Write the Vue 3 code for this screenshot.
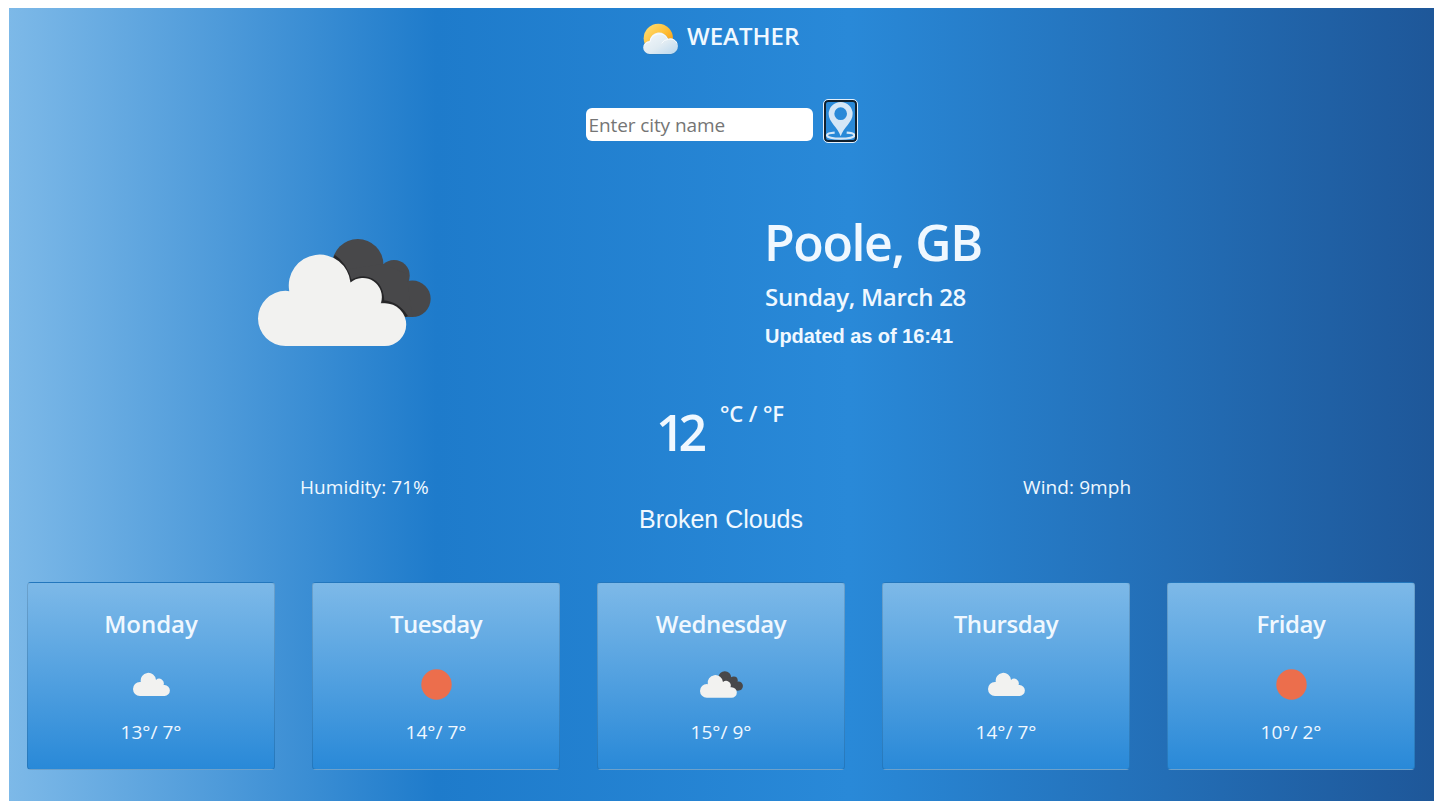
<script setup>
const days = [
  { name: 'Monday', cls: 'mon', icon: 'cloud', temp: '13°/ 7°' },
  { name: 'Tuesday', cls: 'tue', icon: 'sun', temp: '14°/ 7°' },
  { name: 'Wednesday', cls: 'wed', icon: 'broken', temp: '15°/ 9°' },
  { name: 'Thursday', cls: 'thu', icon: 'cloud', temp: '14°/ 7°' },
  { name: 'Friday', cls: 'fri', icon: 'sun', temp: '10°/ 2°' },
]
</script>

<template>
  <main class="app">
    <header class="brand">
      <svg class="logo" viewBox="0 0 108 94">
        <defs>
          <linearGradient id="sunFill" x1="0" y1="0" x2="1" y2="1">
            <stop offset="0" stop-color="#ffe27a" />
            <stop offset="0.5" stop-color="#ffbf38" />
            <stop offset="1" stop-color="#f08a00" />
          </linearGradient>
          <linearGradient id="cloudFill" x1="0" y1="0" x2="1" y2="1">
            <stop offset="0" stop-color="#f4f8fb" />
            <stop offset="0.55" stop-color="#e0ebf2" />
            <stop offset="1" stop-color="#b9d7ee" />
          </linearGradient>
        </defs>
        <circle cx="46" cy="45" r="44" fill="url(#sunFill)" />
        <path d="M20 93a19 19 0 0 1 1-40a28 28 0 0 1 53-8a24 24 0 1 1 10 48z" fill="#3277ad" opacity=".5" transform="translate(1 1)" />
        <path d="M20 92a19.500 19.500 0 0 1 0-39a28.500 28.500 0 0 1 55-7a23.500 23.500 0 1 1 9 46z" fill="url(#cloudFill)" />
        <path d="M4 66a18 18 0 0 1 17-11a28 27 0 0 1 53-8M56 60a25 25 0 0 1 20-12a23 23 0 0 1 26 12" fill="none" stroke="#fff" stroke-width="3" opacity=".8" />
      </svg>
      <h1>WEATHER</h1>
    </header>

    <form class="search" @submit.prevent>
      <input type="text" placeholder="Enter city name" />
      <button type="button" aria-label="Current location">
        <svg viewBox="0 0 87 117">
          <path d="M26 95C10 96 3 99 3 103c0 6 18 10 41 10s41-4 41-10c0-4-8-7-23-8" fill="none" stroke="#d5e6f6" stroke-width="6.500" />
          <path fill-rule="evenodd" d="M44 106C36 80 8 63 8 39a36 36 0 0 1 72 0c0 24-28 41-36 67zM44 19a19 19 0 1 0 0 38 19 19 0 0 0 0-38z" fill="#d5e6f6" />
        </svg>
      </button>
    </form>

    <section class="current">
      <div class="picture">
        <svg class="big-icon" viewBox="54 54 520 324">
          <g fill="#48484a">
            <circle cx="354" cy="132" r="77" />
            <circle cx="463" cy="165" r="47" />
            <circle cx="518" cy="235" r="55" />
            <path d="M300 150L430 130 500 160 518 290H430z" />
          </g>
          <path d="M283 107Q317 128 333 184Q350 171 371 171Q427 177 430 243Q475 247 501 288" fill="none" stroke="#262628" stroke-width="8" />
          <path d="M137 377a83 83 0 0 1 0-166q6 0 11 1a93 93 0 1 1 184-26a57 57 0 0 1 91 62h12a64.500 64.500 0 0 1 0 129z" fill="#f2f2f0" />
        </svg>
      </div>
      <div class="place">
        <h2>Poole, GB</h2>
        <h3>Sunday, March 28</h3>
        <h4>Updated as of 16:41</h4>
      </div>
    </section>

    <section class="details">
      <p class="side humidity"><span>Humidity: 71%</span></p>
      <div class="middle">
        <div class="temperature">
          <strong>12</strong>
          <span class="units">°C / °F</span>
        </div>
        <p class="description">Broken Clouds</p>
      </div>
      <p class="side wind"><span>Wind: 9mph</span></p>
    </section>

    <section class="forecast">
      <div v-for="day in days" :key="day.name" class="column">
        <article class="card">
          <h3><span :class="day.cls">{{ day.name }}</span></h3>
          <div class="slot">
            <svg v-if="day.icon === 'sun'" width="31" height="31" viewBox="0 0 31 31">
              <circle cx="15.500" cy="15.500" r="15.200" fill="#ec6e4c" />
            </svg>
            <svg v-else-if="day.icon === 'cloud'" width="37" height="24" viewBox="54 92 447 286" preserveAspectRatio="none">
              <path d="M137 377a83 83 0 0 1 0-166q6 0 11 1a93 93 0 1 1 184-26a57 57 0 0 1 91 62h12a64.500 64.500 0 0 1 0 129z" fill="#f2f2f0" />
            </svg>
            <svg v-else width="43" height="27" viewBox="54 54 520 324">
              <g fill="#48484a">
                <circle cx="354" cy="132" r="77" />
                <circle cx="463" cy="165" r="47" />
                <circle cx="518" cy="235" r="55" />
                <path d="M300 150L430 130 500 160 518 290H430z" />
              </g>
              <path d="M137 377a83 83 0 0 1 0-166q6 0 11 1a93 93 0 1 1 184-26a57 57 0 0 1 91 62h12a64.500 64.500 0 0 1 0 129z" fill="#f2f2f0" />
            </svg>
          </div>
          <p>{{ day.temp }}</p>
        </article>
      </div>
    </section>
  </main>
</template>

<style>
html,
body {
  margin: 0;
  background: #fff;
  overflow: hidden;
}
</style>

<style scoped>
.app {
  box-sizing: border-box;
  width: 1425px;
  height: 793px;
  margin: 8px 0 0 9px;
  display: flow-root;
  color: aliceblue;
  font-family: "Open Sans", "Noto Sans", sans-serif;
  background: linear-gradient(to right, #7db9e8 0%, #1e7bcb 30%, #2989d8 59%, #1e5799 100%);
}
h1, h2, h3, h4, p {
  margin: 0;
  font-weight: 600;
  white-space: nowrap;
}
.brand {
  display: flex;
  justify-content: center;
  align-items: flex-start;
  gap: 8px;
  height: 91px;
}
.logo {
  width: 36px;
  height: 32px;
  margin-top: 15px;
}
.brand h1 {
  font-size: 24px;
  line-height: 40px;
  margin-top: 8px;
  letter-spacing: 0;
  width: 113px;
}
.search {
  display: flex;
  justify-content: center;
  gap: 10px;
  height: 44px;
}
.search input {
  box-sizing: border-box;
  width: 227px;
  height: 33px;
  margin: 9px 0 0;
  padding: 1px 2px 1px 3px;
  border: 0;
  border-radius: 6px;
  background: #fff;
  font: 400 19px "Open Sans", "Noto Sans", sans-serif;
  letter-spacing: -0.1px;
}
.search input::placeholder {
  color: #757575;
  opacity: 1;
}
.search button {
  box-sizing: border-box;
  width: 35px;
  height: 44px;
  padding: 0;
  border: 1px solid #e4effa;
  border-radius: 5px;
  background: transparent;
  box-shadow: inset 0 0 0 2px #10202e;
}
.search svg {
  display: block;
  width: 29px;
  height: 39px;
  margin: 1px 2px 2px;
}
.current {
  display: flex;
  height: 227px;
}
.picture {
  width: 756px;
}
.big-icon {
  display: block;
  width: 173px;
  height: 109px;
  margin: 95px 0 0 249px;
}
.place {
  padding-top: 70px;
}
.place h2 {
  font-size: 50px;
  line-height: 58px;
  letter-spacing: -1.4px;
  margin-left: -1px;
}
.place h3 {
  font-size: 24px;
  line-height: 40px;
  margin-top: 6px;
  letter-spacing: -0.27px;
}
.place h4 {
  font: 700 20px/36px "Liberation Sans", Arial, sans-serif;
  margin-top: 1px;
  letter-spacing: -0.05px;
}
.details {
  display: grid;
  grid-template-columns: 560px 305px 560px;
  height: 204px;
}
.side {
  padding-top: 103px;
  font-size: 19px;
  font-weight: 400;
  line-height: 28px;
}
.humidity {
  padding-left: 291px;
  letter-spacing: 0.05px;
}
.wind {
  padding-left: 149px;
  letter-spacing: 0.1px;
}
.temperature {
  display: flex;
  padding: 33px 0 0 87px;
}
.temperature strong {
  font-size: 50px;
  font-weight: 600;
  line-height: 58px;
  height: 60px;
  width: 64px;
  letter-spacing: -6px;
}
.units {
  font-size: 22px;
  font-weight: 600;
  line-height: 30px;
  letter-spacing: -0.1px;
  margin-top: -5px;
  white-space: nowrap;
}
.description {
  font: 400 25px/36px "Liberation Sans", Arial, sans-serif;
  margin: 38px 0 0;
  padding-left: 70px;
}
.forecast {
  display: grid;
  grid-template-columns: repeat(5, 285px);
  margin-top: 8px;
}
.column {
  padding: 0 19px 0 18px;
}
.card {
  box-sizing: border-box;
  height: 188px;
  border: 1px solid rgba(0, 0, 0, 0.125);
  border-radius: 4px;
  background-image: linear-gradient(to bottom, #7db9e8, #2989d8);
  text-align: center;
}
.card h3 {
  font-size: 24px;
  line-height: 40px;
  padding-top: 21px;
  letter-spacing: -0.4px;
}
.card .mon {
  letter-spacing: -0.05px;
}
.card .tue {
  letter-spacing: -0.6px;
}
.slot {
  height: 50px;
  margin-top: 15px;
  display: flex;
  justify-content: center;
  align-items: center;
}
.card p {
  font-size: 19px;
  font-weight: 400;
  line-height: 28px;
  margin-top: 9px;
  letter-spacing: 0;
}
</style>
